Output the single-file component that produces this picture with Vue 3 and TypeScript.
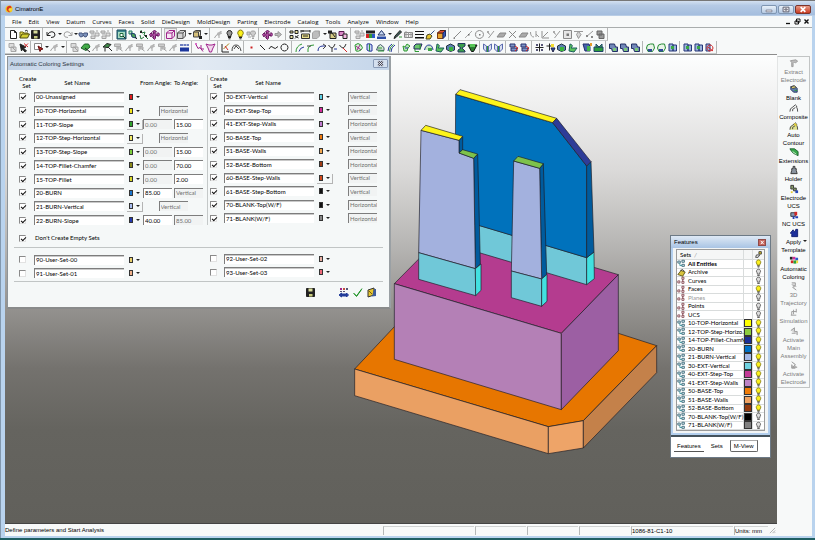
<script setup lang="ts">
import { h, reactive, ref, type FunctionalComponent } from 'vue'

type Shape = [d: string, fill: string, stroke?: string]

const K = '#222', G = '#a2a2a2', B = '#26379b', GR = '#2f9a35', P = '#a0248c', T = '#2b8a93', Y = '#f3dc2e', R = '#d32626'

const glyphs: Record<string, Shape[]> = {
  new: [['M2.5 1.5h4l2 2v6h-6z', '#fff', K], ['M6.5 1.5v2h2', 'none', K]],
  open: [['M1 9V3h3l1 1h4v2', '#e8d84a', '#6b6512'], ['M1 9l2-4h7.500l-2 4z', '#d3cd31', '#4c4a12'], ['M6 2q2-1.500 3 .5', 'none', K]],
  save: [['M1.500 1.500h8v8h-8z', '#222', K], ['M3.500 1.500h4v3h-4z', '#d8dc9a'], ['M4 7h3.500v2.500H4z', '#c6ca7c']],
  undo: [['M1 3v3.500h3.500M1.500 6Q3 2.500 6 2.700T9 6q0 2.500-4 2.500', 'none', K]],
  redo: [['M10 3v3.500H6.500M9.500 6Q8 2.500 5 2.700T2 6q0 2.500 4 2.500', 'none', G]],
  glasses: [['M1 4h3l1 1.500L6 4h3.500v2L8 8 6 7.500 5.300 6 4.500 7.500 2.500 8 1 6z', '#7d93bb', '#44557f']],
  selGrey: [['M1 2h4v2H1zM6 4h4v3H6zM2 7h4v2.500H2z', '#ddd', G], ['M2 5h3M7 2h2', 'none', G]],
  fit: [['M1 1h9v9H1z', '#3d8a8f', '#1b4a5f'], ['M2 3h7v6H2z', '#a9dcc4'], ['M4 4.500h3v3H4z', '#fff', '#216a3f'], ['M7 7l2.500 2.500', 'none', K]],
  zoomG: [['M2 2l3 0 0 3-3 0z', '#bfe2c0', '#276'], ['M4 4l4 1 1 4-4-1z', '#4da457', '#1c3c6c'], ['M8 8l2 2', 'none', K]],
  panG: [['M3 1l1 3 3-1-1 3 4 4M2 6l1 4 3-2', 'none', '#23753a'], ['M2 2h2v2H2zM7 6h2v2H7z', '#222']],
  rotP: [['M5.500 1l2 2h-1.500v2h3v-1.500l2 2-2 2V6.500H6.500v2.500l-1 1.500-2-2h1V7H2v1L.5 5.500l2-2V5h2V3h-1z', '#b14fa4', '#6a1b63']],
  cubeP: [['M1.500 4h5.500v5.500H1.500zM1.500 4l2.500-2.500h5.500L7 4M9.500 1.500V7L7 9.500', '#f6e4f3', P]],
  cubeG: [['M1.500 4h5.500v5.500H1.500zM1.500 4l2.500-2.500h5.500L7 4M9.500 1.500V7L7 9.500', '#d4d4d4', '#555']],
  cubeK: [['M1.500 3h5v5h-5zM1.500 3l2-1.500h5l-2 1.500M8.500 1.500v5L6.500 8', '#d5c07a', '#444'], ['M7 7h3v3H7z', '#222']],
  bulbK: [['M5.500 1.500a2.500 2.500 0 0 1 1.500 4.500v1.500H4V6A2.500 2.500 0 0 1 5.500 1.500z', '#999', K], ['M4 8.500h3M4.500 9.800h2', 'none', K]],
  bulbY: [['M5.500 1a3 3 0 0 1 1.700 5.300v1.200H3.800V6.300A3 3 0 0 1 5.500 1z', '#fbf01c', '#857c10'], ['M4 8.500h3M4.500 9.800h2', 'none', K]],
  bulbG: [['M1 3h3v3H1zM7 2a2 2 0 0 1 1 4v2H6V6a2 2 0 0 1 1-4z', '#ccc', G], ['M2 8h3M6 9.500h2', 'none', G]],
  arrG: [['M2 4.500h3v-2l3.500 3-3.500 3v-2H2z', '#bbb', '#999']],
  layers: [['M1 2h3v2H1zM6 1.500h3v3H6zM1 6.500h3v3H1z', '#ece3a0', K], ['M6 7l3.500 2M9.500 6L6 9.500', 'none', K]],
  measure: [['M1 2h9M1 1v2.500M10 1v2.500M3 1v2', 'none', K], ['M1.500 5h8v4.500h-8z', '#eadf8d', '#333'], ['M3 7h5', 'none', K]],
  greyBox: [['M1.500 4l2-2h5v5L6 9.500H1.500z', '#bdbdbd', G], ['M8 2v3', 'none', G]],
  cubeDark: [['M3 4h6v5.500H3z', '#d8cd86', K], ['M1 1.500h4v3H1z', '#222'], ['M5 4l3 4', 'none', K]],
  cubePink: [['M1 2.500h5v4H1z', '#d98ac7', '#5a1950'], ['M5 5h4v4.500H5z', '#f3b8e0', K]],
  palette: [['M1 1.500h9v3H1z', '#222'], ['M1 5h3v4H1z', R], ['M4 5h3v4H4z', GR], ['M7 5h3v4H7z', '#2b57c8']],
  bucket: [['M2 6l3.500-4.500L9 6z', '#c7d7f0', '#1b2f66'], ['M1 7.500h9V10H1z', '#2b4da6']],
  pen: [['M2 9.500l1-2.500 5-5.500 1.500 1.500-5.500 5.500z', '#3c5c57', K], ['M7 8h3', 'none', GR]],
  dots: [['M1.500 3.500h8v5h-8z', '#f4f4f4', '#888'], ['M2 5.500h7M3 2v7M5.500 3v5M8 3v5', 'none', '#999']],
  lines: [['M1 2.500h9M1 5.500h9M1 8.500h9M1 9h9', 'none', '#111']],
  brush: [['M2 6l3-1 2 2-2 3-4 0z', '#e5c42d', '#4a4620'], ['M5.500 5.500L9.500 1.500', 'none', '#33538f']],
  cubeCol: [['M1.500 4h5.500v5.500H1.500z', '#e8a42f', '#7c3b12'], ['M1.500 4l2.500-2.500h5.500L7 4z', '#e14f38', '#5b2410'], ['M7 4l2.500-2.500V7L7 9.500z', '#3658b8', '#1c2b6b']],
  line: [['M2 9L9 2', 'none', '#8a8a8a'], ['M1.500 8.500h1.500v1.500H1.500z', '#888']],
  line2: [['M2 9L9 2', 'none', '#aaa'], ['M5 5h1.500v1.500H5z', '#666']],
  circG: [['M5.500 1.500a4 4 0 1 1-.1 0z', 'none', '#8a8a8a'], ['M5 5h1.500v1.500H5z', '#777']],
  yG: [['M2 3l3 2.500M9 2L3.500 9', 'none', '#999'], ['M2 2h2v2H2z', '#aaa']],
  planeG: [['M1 8l3-4h6L7.500 8z', '#aaa', '#888']],
  xG: [['M2 2l7 7M9 2L2 9', 'none', '#888']],
  axG: [['M2 2v7h7M3 8l5-5', 'none', '#8f8f8f']],
  uG: [['M1.500 3q0 5 3.500 5M7 2v6M7 5l3 3', 'none', '#999']],
  boxG: [['M1.500 1.500h8v8h-8z', '#e6e6e6', '#8a8a8a'], ['M4.500 4.500h2.500v2.500H4.500z', '#777']],
  ptG: [['M1 2.500h9M5.500 2.500l2.500 3-2.500 4-2-4z', '#d5d5d5', '#999']],
  pctG: [['M2 8l7-6', 'none', '#999'], ['M2 6h2v2H2zM7 7h2v2H7z', '#888']],
  solidG: [['M2 2h5v4H2zM4 5h5v4.500H4z', '#999', '#666']],
  curG: [['M2 1.500h5v4H2zM4 5h5v4.500H4z', '#ddd', '#a7a7a7'], ['M5 5l4 4', 'none', G]],
  curR: [['M2 2l6 3-2.500 1L8.500 9l-1.500 1-2.500-3L3.500 9z', '#222', K], ['M6 1.500l4 3.500M10 1.500L6.500 5', 'none', R]],
  selR: [['M1.500 1.500h7v6h-7z', '#fff', '#888'], ['M5 4l5 3-2 .5-1 2z', '#b3241f', '#611']],
  toolG: [['M1.500 9q1-3 4-4l3-3M5 5l4-1M6 4v5', 'none', G], ['M4 4l4-2v3l-3 2z', '#b5b5b5']],
  toolG2: [['M1.500 2h6v2.500h-6zM5 5h3v2H5z', '#ccc', '#aaa'], ['M4 5v4M7 7l2.500 2', 'none', '#999']],
  green1: [['M1 6l3.500-4h4l1.500 3-4 3.500z', '#43ac49', '#1b5f27'], ['M5 6l5 4', 'none', K]],
  green2: [['M1 5l4-3.500 4 1-3 3z', '#3f8b49', '#222'], ['M6 5l4 4M3 6v3.500', 'none', K]],
  blueM: [['M1 2h3v2H1zM4.500 2H7v2H4.500zM7.500 2H10v2H7.500z', '#6e7fc1'], ['M1 5.500h9v4H1z', '#1d379d']],
  pinkC: [['M1.500 1.500l2.500 5 2-1 3 4M7 3v4l3 0', 'none', P], ['M1 1h2v2H1z', '#d86fc8']],
  pinkV: [['M1 2l3 1h3l3-1-2.500 5-1 3h-2l-1-3z', '#f0d8ec', P]],
  editY: [['M2 2v8h7', 'none', K], ['M3.500 7L9 1.500', 'none', '#a17b12'], ['M5 4l3 4', 'none', R]],
  arc: [['M1 9q0-6 4-6t5 6M3 7l2-3 3 3', 'none', '#444']],
  dot: [['M4.500 4.500h2v2h-2z', '#c22']],
  seg: [['M3 3l5 5', 'none', K]],
  wave: [['M1 7q2-4 4-1.500T10 4.500', 'none', K]],
  circ: [['M5.500 2a3.500 3.500 0 1 1-.1 0z', 'none', K]],
  gc1: [['M2 10q0-6 6-8', 'none', GR], ['M5 9.500q1-4 5-4.500', 'none', B]],
  gc2: [['M3 10q-1-7 6-7', 'none', GR], ['M2 4h4', 'none', '#444']],
  gc3: [['M2 9q0-5 5-5h3', 'none', B], ['M7 2l3 2-3 3', 'none', '#444']],
  gc4: [['M1.500 3q2 3 3.500 3T8 2M5 6v4', 'none', '#333'], ['M7 7h3', 'none', B]],
  gc5: [['M1.500 3q2 3 3.500 3T8 2', 'none', '#333'], ['M5 6l4 4', 'none', R]],
  sf1: [['M2 3q3-3 6 0t0 5-5 1z', '#d9edd7', GR], ['M3 4l5 4M7 3L4 8', 'none', P]],
  sf2: [['M3 2q3-1 5 1v6q-3 1-5-1z', '#c7d5f2', B], ['M5.500 2v7', 'none', GR]],
  sf3: [['M1.500 8q1-5 4-5.500l3.500 3v3z', '#d5e9d5', '#46596b'], ['M3 9h6M3 6h4', 'none', GR]],
  sf4: [['M2 9q0-5 4-7M5 10q0-5 4-7', 'none', B], ['M3.500 9.500q0-5 4-7', 'none', GR]],
  so1: [['M2 4l2 1 2-3 3 2-2 2-1 3H3z', '#b8e4b5', GR], ['M4 6h3', 'none', B]],
  so2: [['M2 4l2-2h6L8 7H2z', '#6cc66f', '#226'], ['M3 7v2.500h4M8 2v6', 'none', GR]],
  so3: [['M1.500 8q1-5 4.500-5t4 5', '#c7e9c4', B], ['M5 6h4v3H5z', '#3fa548']],
  so4: [['M3 2q4 1 1 4h6l-3 4-5-1z', '#5cc35c', '#1c5e5e']],
  so5: [['M1.500 4l4-2 4 2v4l-4 1.500-4-2z', '#5b7fb0', '#234'], ['M4 5h4v4H4z', '#3bb33f']],
  so6: [['M2 1.500h7v2.500l-3 2 3 3v1H2V8l3-2-3-2z', '#3b9d4d', '#23375f']],
  so7: [['M1 3h9L6.500 9.500h-2z', '#2b7b33', '#111'], ['M3 2h5v3H3z', '#56c456']],
  tr: [['M1.500 2l3 2v6l-3-3zM9.500 2l-3 2v6l3-3z', '#d8dff0', '#5a6aae'], ['M5.500 4v6', 'none', GR]],
  wk: [['M2 2h5v3H2zM3 6h6v3H3z', '#8096c6', '#26306e'], ['M7 4l3 2-3 3', 'none', R]],
  gd: [['M1.500 5.500h8M5.500 1.500v8', 'none', K], ['M2 2h2v2H2zM7 2h2v2H7zM2 7h2v2H2zM7 7h2v2H7z', '#557']],
  gdY: [['M1.500 4h7M4.500 1.500v7', 'none', K], ['M6 2h3v3H6z', Y], ['M6 6l4 0-2 4z', '#2b57a8', '#224']],
  mold1: [['M1 2h6l1 3v4H3z', '#4662aa', '#1e2d6b'], ['M5 4h3v5H5z', '#43b648'], ['M8 1h2v3H8z', '#e59b2a']],
  mold2: [['M1 5h9v4.500H1z', '#2d9d3c', '#1e4569'], ['M3 2l3 3 3-3v3H3z', '#54c255', '#1e4569']],
  mold3: [['M1.500 2h5l1 3h2v4.500h-5l-1-3h-2z', '#7188b8', '#223065'], ['M5 6h3v3H5z', '#7cc97a']],
  mold4: [['M1.500 6q0-4 4-4h3l1 4-2 3.500H3z', '#e9f4e8', '#258b34'], ['M3 7h4v2.500H3z', '#34489e']],
  mold5: [['M2 2h4v7H2zM6 3h3.500v6H6z', '#9cb4dd', '#263679'], ['M4 4h3v3H4z', '#39a845']],
  moldR: [['M2 2h4v7H2z', '#9cb4dd', '#263679'], ['M6 3a3 3 0 1 1-.1 0zM4 5l5 4', 'none', R]],
  extract: [['M1.500 3l6-1 2 1.500-2.500 2-1-1L4.500 6v3.500H3V5z', '#bbb', '#9a9a9a']],
  blank: [['M2 3l4-1 3 3v4H5L2 6z', '#5e7cae', '#26365e'], ['M2 3l4-1 2 2-4 1z', '#e6d775', '#444'], ['M6 7h3', 'none', GR]],
  comp: [['M1 9.500q0-4 2.500-4.500L7 2q2 1 1.500 3 1 1 1 4.500M4 9V7l3-2', 'none', '#444']],
  auto: [['M1 9.500q0-4 2.500-4.500L7 2q2 1 1.500 3 1 1 1 4.500M4 9V7l3-2', '#dde08c', '#444'], ['M5 2l4 2-2 2z', '#e4cf33']],
  ext: [['M1 2h5l4 3v4.500L5 7 3 5z', '#39a84b', '#1c5f2d'], ['M4 5l4 3', 'none', '#d8f3d6']],
  holder: [['M4.500 1.500h2V4H8v2l1 3.500H2L3 6V4h1.500z', '#8a94a0', '#333']],
  eucs: [['M2 1.500h3v3h3v3H5v-2H2z', '#8aa06c', '#333'], ['M7 7h3v3H7z', '#2848b8'], ['M2 8h2v2H2z', '#e6cc2c']],
  nucs: [['M2 3h5v4H2z', '#8599b5', '#333'], ['M6 2h3v4H6z', R], ['M7 7h3v2H7zM4 7h2v3H4z', '#243fb3']],
  apply: [['M1.500 5.500l3-3.500 1 2h1l1-2.500h2V9.500H3V7z', '#1d2f9b', '#111f70']],
  acol: [['M1 2h3v3H1z', K], ['M4 2h3v3H4z', '#d32e9a'], ['M7 3h3v3H7z', '#2b57c8'], ['M2 6h3v3H2z', R], ['M5 6h3v3.500H5z', '#2aa23a'], ['M8 6h2v3H8z', Y]],
  g1: [['M3 2h4v3l-3 2 4 3M3 4l5 2', '#ddd', '#9a9a9a']],
  g2: [['M3 9V5h5M5 3v5M2 9h6M8 2v4', 'none', '#999']],
  g3: [['M2 5l4-3v4l3 0v4M3 8h4', '#d5d5d5', '#999']],
  g4: [['M3 2l4 3-3 3 5 0M3 5v4h4', '#bbb', '#999']],
  sync: [['M2 1h2v2H2z', P], ['M5 1h2v2H5z', '#c2503e'], ['M8 1h2v2H8z', '#557'], ['M2 4h2v1H2zM5 4h2v1H5z', '#557'], ['M1 8l2.500-2v1h5V6L10.500 8l-2 2V9h-5v1z', '#223c9a', '#223c9a']],
  check: [['M1.500 6l3 3L10 1.500', 'none', '#1f9427'], ['M2 6.500l2.500 3L9.500 2.500', 'none', '#1f9427']],
  exit: [['M2 3l6-2v7l-6 2z', '#e6c62f', '#333'], ['M8 2h2v7l-4 .5z', '#3f5d9a'], ['M3 4l3 3', 'none', '#7a5a10']],
  setT: [['M1 2.500h3V5H1zM6 1.500h3V4H6zM6 6.500h3V9H6z', '#e2f0f4', '#2f5f70'], ['M3.500 5v3H6', 'none', T]],
  setP: [['M1 6h2.500v2.500H1zM6 1.500h2.500V4H6zM6 6.500h2.500V9H6zM7 4v2.500', '#fff', '#7c3a44']],
  arch: [['M1 8l4-5 5 2-3 5z', '#d7c23e', '#52480f'], ['M4 3l3-1 2 2', 'none', K]],
  key: [['M2 9l1-3 4 0-2 3z', '#eee', '#333'], ['M6 2h3v3H6z', '#dcc52c', '#333']],
  bulbO: [['M5.500 1.500a2.500 2.500 0 0 1 1.500 4.500v1.500H4V6A2.500 2.500 0 0 1 5.500 1.500z', '#ddd', '#555'], ['M4 9h3', 'none', K]],
}

const Glyph: FunctionalComponent<{ name: string }> = (p) =>
  h('svg', { viewBox: '0 0 11 11', 'aria-hidden': 'true' },
    (glyphs[p.name] ?? []).map(([d, fill, stroke]) => h('path', { d, fill, stroke: stroke ?? 'none' })))
Glyph.props = ['name']

const menus = ['File', 'Edit', 'View', 'Datum', 'Curves', 'Faces', 'Solid', 'DieDesign', 'MoldDesign', 'Parting', 'Electrode', 'Catalog', 'Tools', 'Analyze', 'Window', 'Help']

// "v" is a drop-down arrow, everything else is a glyph name
const bars: string[][][] = [
  [
    ['new', 'open', 'save'],
    ['undo', 'v', 'redo', 'v', 'glasses', 'selGrey', 'selGrey'],
    ['fit', 'zoomG', 'panG', 'rotP'],
    ['cubeP', 'cubeG', 'v', 'cubeK', 'v'],
    ['toolG', 'bulbK', 'bulbY', 'bulbG'],
    ['rotP', 'arrG'],
    ['layers', 'measure', 'greyBox', 'v', 'cubeDark', 'cubePink'],
    ['selGrey', 'palette', 'bucket', 'v', 'pen', 'dots', 'lines', 'brush', 'cubeCol'],
    ['line', 'line2', 'circG', 'yG', 'planeG', 'xG', 'planeG', 'uG', 'axG', 'yG', 'boxG', 'ptG', 'pctG', 'solidG'],
  ],
  [
    ['curG', 'curR'],
    ['selR', 'v', 'toolG', 'v'],
    ['curG', 'green1', 'toolG', 'green2', 'toolG2', 'toolG', 'toolG2', 'toolG', 'toolG2', 'toolG', 'blueM'],
    ['pinkC', 'pinkV'],
    ['editY', 'arc'],
    ['dot', 'seg', 'wave', 'circ'],
    ['gc1', 'gc2', 'gc3', 'gc4', 'gc5'],
    ['sf1', 'sf2', 'sf3', 'sf4'],
    ['so1', 'so2', 'so3', 'so4', 'so5', 'so6', 'so7'],
    ['tr', 'tr'],
    ['wk', 'wk'],
    ['gd', 'gdY', 'so5', 'so4'],
    ['mold1', 'mold2'],
    ['mold3', 'mold3', 'mold3'],
    ['mold4', 'mold4', 'mold5'],
    ['mold5', 'mold5', 'moldR'],
  ],
]

interface SetRow { name: string; on: boolean; color: string; from?: string; to?: string; kind?: string; lockFrom?: boolean; lockTo?: boolean; raised?: boolean }

const leftSets = reactive<SetRow[]>([
  { name: '00-Unassigned', on: true, color: '#e01c1c' },
  { name: '10-TOP-Horizontal', on: true, color: '#f2e41c', kind: 'Horizontal' },
  { name: '11-TOP-Slope', on: true, color: '#2fa42c', from: '0.00', to: '15.00', lockFrom: true, raised: true },
  { name: '12-TOP-Step-Horizontal', on: true, color: '#f4ec6a', kind: 'Horizontal', raised: true },
  { name: '13-TOP-Step-Slope', on: true, color: '#7ccf3c', from: '0.00', to: '15.00', lockFrom: true },
  { name: '14-TOP-Fillet-Chamfer', on: true, color: '#8c8a1a', from: '0.00', to: '70.00', lockFrom: true },
  { name: '15-TOP-Fillet', on: true, color: '#d9d82a', from: '0.00', to: '2.00', lockFrom: true },
  { name: '20-BURN', on: true, color: '#1a74cc', from: '85.00', to: 'Vertical', lockTo: true },
  { name: '21-BURN-Vertical', on: true, color: '#a8bdf0', kind: 'Vertical', raised: true },
  { name: '22-BURN-Slope', on: true, color: '#2438b0', from: '40.00', to: '85.00', lockTo: true },
])
const rightSets = reactive<SetRow[]>([
  { name: '30-EXT-Vertical', on: true, color: '#5ed0e4', kind: 'Vertical' },
  { name: '40-EXT-Step-Top', on: true, color: '#d42c9c', kind: 'Vertical' },
  { name: '41-EXT-Step-Walls', on: true, color: '#c07ad0', kind: 'Horizontal' },
  { name: '50-BASE-Top', on: true, color: '#ee7a10', kind: 'Vertical' },
  { name: '51-BASE-Walls', on: true, color: '#f2a850', kind: 'Horizontal' },
  { name: '52-BASE-Bottom', on: true, color: '#a03c14', kind: 'Horizontal' },
  { name: '60-BASE-Step-Walls', on: true, color: '#d24a1c', kind: 'Vertical', raised: true },
  { name: '61-BASE-Step-Bottom', on: true, color: '#111', kind: 'Vertical' },
  { name: '70-BLANK-Top(W/F)', on: true, color: '#111', kind: 'Horizontal' },
  { name: '71-BLANK(W/F)', on: true, color: '#888', kind: 'Horizontal' },
])
const userLeft = reactive<SetRow[]>([
  { name: '90-User-Set-00', on: false, color: '#e8cf6a' },
  { name: '91-User-Set-01', on: false, color: '#f0b08a' },
])
const userRight = reactive<SetRow[]>([
  { name: '92-User-Set-02', on: false, color: '#e8b0a4' },
  { name: '93-User-Set-03', on: false, color: '#ee6a7a' },
])
const skipEmpty = ref(true)

const commands = [
  { icon: 'extract', label: ['Extract', 'Electrode'], off: true },
  { icon: 'blank', label: ['Blank'] },
  { icon: 'comp', label: ['Composite'] },
  { icon: 'auto', label: ['Auto', 'Contour'] },
  { icon: 'ext', label: ['Extensions'] },
  { icon: 'holder', label: ['Holder'] },
  { icon: 'eucs', label: ['Electrode', 'UCS'] },
  { icon: 'nucs', label: ['NC UCS'] },
  { icon: 'apply', label: ['Apply', 'Template'], menu: true },
  { icon: 'acol', label: ['Automatic', 'Coloring'] },
  { icon: 'g1', label: ['3D', 'Trajectory'], off: true },
  { icon: 'g2', label: ['Simulation'], off: true },
  { icon: 'g3', label: ['Activate', 'Main', 'Assembly'], off: true },
  { icon: 'g4', label: ['Activate', 'Electrode'], off: true },
]

interface Feature { name: string; icon: string; lit: boolean; color?: string; cls?: string }
const features: Feature[] = [
  { name: 'All Entities', icon: 'setT', lit: true, cls: 'strong' },
  { name: 'Archive', icon: 'arch', lit: false },
  { name: 'Curves', icon: 'setP', lit: false },
  { name: 'Faces', icon: 'setP', lit: true },
  { name: 'Planes', icon: 'setP', lit: false, cls: 'dim' },
  { name: 'Points', icon: 'setP', lit: false },
  { name: 'UCS', icon: 'setP', lit: false },
  { name: '10-TOP-Horizontal', icon: 'setT', lit: true, color: '#ffff00' },
  { name: '12-TOP-Step-Horizo...', icon: 'setT', lit: true, color: '#8ccb3e' },
  { name: '14-TOP-Fillet-Chamfer', icon: 'setT', lit: true, color: '#1c2f96' },
  { name: '20-BURN', icon: 'setT', lit: true, color: '#0072c6' },
  { name: '21-BURN-Vertical', icon: 'setT', lit: true, color: '#a4b8e6' },
  { name: '30-EXT-Vertical', icon: 'setT', lit: true, color: '#70d2e0' },
  { name: '40-EXT-Step-Top', icon: 'setT', lit: true, color: '#c23a96' },
  { name: '41-EXT-Step-Walls', icon: 'setT', lit: true, color: '#bd84c6' },
  { name: '50-BASE-Top', icon: 'setT', lit: true, color: '#f07c08' },
  { name: '51-BASE-Walls', icon: 'setT', lit: true, color: '#f0a262' },
  { name: '52-BASE-Bottom', icon: 'setT', lit: true, color: '#94390d' },
  { name: '70-BLANK-Top(W/F)', icon: 'setT', lit: false, color: '#000' },
  { name: '71-BLANK(W/F)', icon: 'setT', lit: false, color: '#808080' },
]

// painted back to front
const faces: [string, string][] = [
  ['44,867 180,722 835,760 950,797 730,1022 625,1040', '#e77600'],
  ['44,867 625,1040 625,1121 44,947', '#eaa063'],
  ['625,1040 730,1022 730,1104 625,1121', '#eea468'],
  ['730,1022 950,797 950,878 730,1104', '#c4814a'],
  ['163,611 337,435 835,584 664,760', '#b43c8f'],
  ['163,611 664,760 664,989 163,838', '#b480b6'],
  ['664,760 835,584 835,812 664,989', '#9c5fa3'],
  ['347,415 740,533 740,614 347,497', '#70c8d8'],
  ['740,533 762,516 763,596 740,614', '#42e0e0'],
  ['347,43 638,128 740,258 740,533 345,415', '#0072bc'],
  ['740,258 753,245 762,516 740,533', '#005b9d'],
  ['347,43 360,29 650,115 638,128', '#fdf41a'],
  ['638,128 650,115 753,245 740,258', '#2e3c98'],
  ['401,235 413,222 421,552 406,566', '#005b9d'],
  ['357,181 368,169 368,210 357,219', '#005b9d'],
  ['243,151 357,181 357,219 401,235 406,566 236,518', '#a3b1de'],
  ['243,151 257,136 368,169 357,181', '#fdf41a'],
  ['357,219 368,209 413,222 401,235', '#7dc24b'],
  ['236,518 406,566 407,647 236,598', '#70c8d8'],
  ['406,566 423,552 423,631 407,647', '#42e0e0'],
  ['599,265 610,251 620,583 605,597', '#005b9d'],
  ['521,243 599,265 605,597 514,573', '#a3b1de'],
  ['521,243 534,229 610,251 599,265', '#7dc24b'],
  ['514,573 605,597 605,679 514,653', '#70c8d8'],
  ['605,597 621,583 621,664 605,679', '#42e0e0'],
]
</script>

<template>
  <div class="window">
    <header class="titlebar">
      <svg class="logo" viewBox="0 0 9 9" aria-hidden="true">
        <circle cx="4.500" cy="4.500" r="4" fill="#f4c81e" />
        <path d="M6.500 1A3.600 3.600 0 1 0 6 8Q3 6 4 4.500T7.500 3z" fill="#dc3322" />
        <path d="M4.500 4h3v2h-3z" fill="#f9dc3a" />
      </svg>
      <h1>CimatronE</h1>
      <div class="winbtns">
        <button aria-label="Minimize"><svg viewBox="0 0 8 6"><path d="M1.500 3.500h5v1.500h-5z" fill="#fff" stroke="#667" stroke-width=".6" /></svg></button>
        <button aria-label="Maximize"><svg viewBox="0 0 8 6"><path d="M1.500 1h5v4h-5zM3 2.500h2v1H3z" fill="#fff" stroke="#556" stroke-width=".8" /></svg></button>
        <button class="red" aria-label="Close"><svg viewBox="0 0 8 6"><path d="M2 1l4 4M6 1L2 5" stroke="#fff" stroke-width="1.400" /></svg></button>
      </div>
    </header>

    <div class="body">
      <nav class="menubar">
        <a v-for="m in menus" :key="m" href="#">{{ m }}</a>
        <span class="mdi">
          <button aria-label="Minimize document"><svg viewBox="0 0 7 7"><path d="M1 5.500h4" stroke="#111" stroke-width="1.300" /></svg></button>
          <button aria-label="Restore document"><svg viewBox="0 0 7 7"><path d="M2.500 1h3.500v3H2.500zM1 3h3.500v3H1z" fill="#fff" stroke="#111" /></svg></button>
          <button aria-label="Close document"><svg viewBox="0 0 7 7"><path d="M1.500 1.500l4 4M5.500 1.500l-4 4" stroke="#111" stroke-width="1.400" /></svg></button>
        </span>
      </nav>

      <div v-for="(bar, b) in bars" :key="b" class="toolbar" :class="{ tight: b === 1 }" role="toolbar">
        <div v-for="(group, g) in bar" :key="g" class="group">
          <button v-for="(item, i) in group" :key="i" :class="{ caret: item === 'v', pressed: item === 'cubeP' }" :aria-label="item === 'v' ? 'More' : item">
            <Glyph v-if="item !== 'v'" :name="item" />
          </button>
        </div>
      </div>

      <div class="main">
        <main class="view">
          <svg class="model" viewBox="0 0 990 1140" role="img" aria-label="Electrode model">
            <polygon v-for="([pts, fill], i) in faces" :key="i" :points="pts" :fill="fill" />
          </svg>

          <section class="dialog" role="dialog" aria-label="Automatic Coloring Settings">
            <div class="dialog-title">
              <h2>Automatic Coloring Settings</h2>
              <button aria-label="Close dialog"><svg viewBox="0 0 8 6"><path d="M2 1l4 4M6 1L2 5" stroke="#445" stroke-width="1.800" /><path d="M2 1l4 4M6 1L2 5" stroke="#fff" stroke-width=".7" /></svg></button>
            </div>
            <div class="dialog-body">
              <div class="columns">
                <div class="col left">
                  <div class="heads">
                    <span class="h-create">Create<br>Set</span><span class="h-name">Set Name</span><span class="h-from">From Angle:</span><span class="h-to">To Angle:</span>
                  </div>
                  <div class="rows">
                    <div v-for="r in leftSets" :key="r.name" class="row">
                      <input v-model="r.on" type="checkbox" :aria-label="'Create ' + r.name">
                      <input v-model="r.name" class="field" type="text" aria-label="Set name">
                      <button class="pick" :class="{ raised: r.raised }" :aria-label="'Color of ' + r.name"><i :style="{ background: r.color }"></i></button>
                      <span class="angles">
                        <input v-if="r.kind" class="field" type="text" :value="r.kind" disabled aria-label="Direction">
                        <template v-else-if="r.from">
                          <input v-model="r.from" class="field" type="text" :disabled="r.lockFrom" aria-label="From angle">
                          <input v-model="r.to" class="field" type="text" :disabled="r.lockTo" aria-label="To angle">
                        </template>
                      </span>
                    </div>
                  </div>
                </div>
                <div class="col right">
                  <div class="heads">
                    <span class="h-create">Create<br>Set</span><span class="h-name">Set Name</span>
                  </div>
                  <div class="rows">
                    <div v-for="r in rightSets" :key="r.name" class="row">
                      <input v-model="r.on" type="checkbox" :aria-label="'Create ' + r.name">
                      <input v-model="r.name" class="field" type="text" aria-label="Set name">
                      <button class="pick" :class="{ raised: r.raised }" :aria-label="'Color of ' + r.name"><i :style="{ background: r.color }"></i></button>
                      <span class="angles"><input class="field" type="text" :value="r.kind" disabled aria-label="Direction"></span>
                    </div>
                  </div>
                </div>
              </div>
              <label class="skip"><input v-model="skipEmpty" type="checkbox">Don't Create Empty Sets</label>
              <div class="columns users">
                <div v-for="(list, s) in [userLeft, userRight]" :key="s" class="col" :class="s ? 'right' : 'left'">
                  <div class="rows">
                    <div v-for="r in list" :key="r.name" class="row">
                      <input v-model="r.on" type="checkbox" :aria-label="'Create ' + r.name">
                      <input v-model="r.name" class="field" type="text" aria-label="Set name">
                      <button class="pick" :aria-label="'Color of ' + r.name"><i :style="{ background: r.color }"></i></button>
                    </div>
                  </div>
                </div>
              </div>
              <div class="actions">
                <button class="store" aria-label="Save"><Glyph name="save" /></button>
                <button aria-label="Preview"><Glyph name="sync" /></button>
                <button class="ok" aria-label="Apply"><Glyph name="check" /></button>
                <button aria-label="Exit"><Glyph name="exit" /></button>
              </div>
            </div>
          </section>

          <section class="features" aria-label="Features">
            <div class="features-title">
              <h2>Features</h2>
              <button aria-label="Close features"><svg viewBox="0 0 7 6"><path d="M2 1l3.500 4M5.500 1L2 5" stroke="#fff" stroke-width="1.200" /></svg></button>
            </div>
            <div class="features-body">
              <table>
                <thead>
                  <tr><th>Sets <em>/</em></th><th></th><th><Glyph name="key" /></th></tr>
                </thead>
                <tbody>
                  <tr v-for="f in features" :key="f.name">
                    <td :class="f.cls"><Glyph :name="f.icon" />{{ f.name }}</td>
                    <td><i v-if="f.color" :style="{ background: f.color }"></i></td>
                    <td><Glyph :name="f.lit ? 'bulbY' : 'bulbO'" /></td>
                  </tr>
                </tbody>
              </table>
            </div>
            <div class="tabs">
              <button>Features</button><button class="current">Sets</button><button class="boxed">M-View</button>
            </div>
          </section>
        </main>

        <aside class="guide">
          <div class="guide-box">
            <button v-for="(c, i) in commands" :key="i" :class="{ off: c.off }">
              <Glyph :name="c.icon" />
              <span v-for="l in c.label" :key="l">{{ l }}</span>
              <b v-if="c.menu"></b>
            </button>
          </div>
        </aside>
      </div>

      <footer class="status">
        <span class="msg">Define parameters and Start Analysis</span>
        <span class="w90"></span><span class="w52"></span><span class="w52"></span><span class="w52"></span>
        <span class="w104">1086-81-C1-10</span>
        <span class="units">Units: mm</span>
        <svg class="grip" viewBox="0 0 8 8" aria-hidden="true"><path d="M7 1L1 7M7 4L4 7M7 6L6 7" stroke="#aaa" /></svg>
      </footer>
    </div>
  </div>
</template>

<style>
body { background: #1f5f63; }
html, body, #app { height: 100%; overflow: hidden; }
</style>

<style scoped>
* { box-sizing: border-box; }
.window { display: flex; flex-direction: column; height: calc(100vh - 2px); padding: 0 3px 2px 4px; background: #b9d3ee; border-top: 1px solid #777; border-left: 1px solid #8298ae; font: 6px/8px "Liberation Sans", Arial, sans-serif; color: #000; }
button { display: block; margin: 0; padding: 0; border: 0; background: none; font: inherit; color: inherit; }
h1, h2 { margin: 0; font: inherit; }
svg { display: block; }
a { color: inherit; text-decoration: none; }

.titlebar { display: flex; align-items: center; flex: none; height: 15px; margin: 0 -3px 0 -4px; padding: 1px 4px 0 4px; background: linear-gradient(#d3e0f0, #b5cae5 30%, #a5bede 90%, #c3d4e9); }
.logo { width: 8px; height: 8px; margin-right: 2px; }
.winbtns { display: flex; gap: 1px; margin-left: auto; }
.winbtns button { display: grid; place-items: center; width: 16px; height: 9px; border: 1px solid #7f96b2; border-radius: 2px; background: linear-gradient(#e8f0f9, #b6cae2); }
.winbtns .red { background: linear-gradient(#e79a86, #c93a20); border-color: #7c342a; }
.winbtns svg { width: 10px; height: 7px; }

.body { display: flex; flex-direction: column; flex: 1; min-height: 0; background: #f7f9f9; }
.menubar { display: flex; align-items: center; flex: none; gap: 7px; height: 12px; padding-left: 7px; border-bottom: 1px solid #a9adad; font-family: "Open Sans", "Noto Sans", sans-serif; }
.mdi { display: flex; gap: 2px; margin-left: auto; padding-right: 2px; }
.mdi svg { width: 7px; height: 7px; }

.toolbar { display: flex; align-self: flex-start; flex: none; height: 13px; border-right: 1px solid #b5b5b5; border-bottom: 1px solid #c6c9c9; }
.group { display: flex; align-items: center; padding-right: 1px; padding-left: 3px; border-left: 1px solid #b4b6b6; }
.group:first-child { border-left: 0; }
.tight .group { padding-left: 2px; }
.group button { width: 11px; height: 11px; }
.group .caret { display: grid; place-items: center; width: 5px; height: 11px; }
.caret::before { content: ""; width: 0; border: 2px solid transparent; border-top-color: #222; border-bottom: 0; }
.group svg { width: 11px; height: 11px; }
.pressed { outline: 1px solid #bbb; background: #eee; }

.main { display: flex; flex: 1; min-height: 0; }
.view { position: relative; flex: 1; min-width: 0; border-top: 1px solid #8c8c8c; border-bottom: 1px solid #444; background: linear-gradient(#fdfefe 0%, #f0f0f0 10%, #dad9d8 25%, #b8b7b5 40%, #94928f 54%, #74726e 67%, #65645f 80%, #61605b 100%); }
.model { position: absolute; left: 335px; top: 25px; width: 330px; height: 380px; }
.model polygon { stroke: #1d1d25; stroke-width: 2; stroke-linejoin: round; }

.dialog { position: absolute; left: 2px; top: 1px; width: 384px; border: 1px solid #8d9499; border-right: 2px solid #9aa0a4; border-bottom: 2px solid #898b8b; background: #f5f8f8; }
.dialog-title { display: flex; align-items: center; justify-content: space-between; height: 13px; padding: 0 1px 0 2px; background: linear-gradient(90deg, #c4d4e8, #e2eaf3 50%, #c5d6ea); color: #2c3540; }
.dialog-title button { display: grid; place-items: center; width: 15px; height: 9px; border: 1px solid #8a9cb8; border-radius: 1px; background: #d5e0ef; }
.dialog-title svg { width: 9px; height: 7px; }
.dialog-body { padding: 5px 6px 3px; font-family: Lato, "Liberation Sans", sans-serif; }
.columns { display: flex; align-items: flex-start; }
.col.left { width: 193px; padding-left: 5px; }
.col.right { flex: 1; padding-left: 2px; border-left: 1px solid #c4c8c8; }
.heads { display: flex; height: 15px; text-align: center; }
.heads span { white-space: nowrap; line-height: 7px; }
.h-create { width: 15px; }
.h-name { width: 86px; padding-top: 4px; }
.h-from { width: 50px; padding: 4px 0 0 20px; }
.h-to { width: 32px; padding-top: 4px; }
.rows { display: grid; grid-auto-rows: 1fr; }
.left .rows { height: 137px; }
.right .rows { height: 135px; }
.row { display: flex; align-items: center; }
input[type=checkbox] { appearance: none; flex: none; width: 7px; height: 7px; margin: 0; border: 1px solid #8a8a8a; border-right-color: #e2e2e2; border-bottom-color: #e2e2e2; background: #fff; }
input[type=checkbox]:checked::before { content: ""; display: block; width: 4px; height: 2px; margin: 1px 0 0 1px; border: solid #111; border-width: 0 0 1px 1px; transform: rotate(-45deg); }
.field { width: 90px; height: 10px; margin: 0 0 0 8px; padding: 0 0 1px 1px; border: 0 solid #7d7d7d; border-width: 1px 0 0 1px; outline: 0; background: #fff; font: inherit; line-height: 8px; color: #000; }
.row > .field { box-shadow: inset 0 1px #c9c9c9; }
.pick { display: flex; align-items: center; gap: 3px; width: 16px; height: 10px; margin-left: 2px; padding-left: 3px; }
.pick i { width: 4px; height: 6px; border: 1px solid #333; }
.pick::after { content: ""; border: 2px solid transparent; border-top-color: #222; border-bottom: 0; }
.raised { box-shadow: 1px 1px #b4b4b4; }
.angles { display: flex; justify-content: center; gap: 2px; width: 60px; margin-left: 1px; }
.angles .field { width: 29px; margin: 0; }
.angles .field:disabled { background: #f1f3f3; color: #707070; }
.right .row > .field { margin-left: 7px; }
.right .angles { width: 29px; margin-left: 16px; }
.skip { display: flex; align-items: center; gap: 9px; height: 20px; padding: 2px 0 0 5px; }
.users { padding: 5px 0 1px; border-top: 1px solid #c1c5c5; border-bottom: 1px solid #c1c5c5; }
.users .left .rows, .users .right .rows { height: 27px; }
.users .col.right { border-left-color: transparent; margin-top: -1px; }
.actions { display: flex; justify-content: flex-end; gap: 3px; padding: 5px 6px 6px 0; }
.actions .store { margin-right: 19px; }
.actions svg { width: 11px; height: 11px; }

.features { position: absolute; right: 6px; top: 180px; width: 101px; border: 1px solid #6d7a86; background: #fff; }
.features-title { display: flex; align-items: center; justify-content: space-between; height: 12px; padding: 0 4px 0 3px; background: linear-gradient(#dfe9f5, #a9c4e4); }
.features-title button { width: 8px; height: 7px; border: 1px solid #904a48; background: #c6645c; }
.features-title svg { width: 6px; height: 5px; }
.features-body { padding: 1px 3px 2px; border: solid #b3cfee; border-width: 0 2px 2px; background: #f3f5f5; }
table { display: block; border: 1px solid #9a9a9a; background: #fff; font: 6px/8px Lato, "Liberation Sans", sans-serif; }
thead { display: block; }
tbody { display: grid; grid-auto-rows: 1fr; height: 170px; }
tr { display: grid; grid-template-columns: 1fr 9px 11px; align-items: stretch; min-height: 0; border-bottom: 1px solid #d9dcdc; }
thead tr { height: 10px; background: #f5f6f6; }
th, td { display: flex; align-items: center; min-width: 0; min-height: 0; padding: 0; white-space: nowrap; font-weight: normal; border-right: 1px solid #d9dcdc; }
th:last-child, td:last-child { border-right: 0; }
th:first-child { padding-left: 3px; gap: 3px; }
em { color: #888; }
td svg, th svg { flex: none; }
td:first-child svg { margin: 0 2px 0 0; width: 9px; height: 9px; }
td:last-child svg, th:last-child svg { margin: 0 auto; width: 9px; height: 9px; }
td i { width: 8px; height: 8px; border: 1px solid #333; }
.strong { font-weight: bold; }
.dim { color: #999; }
.tabs { display: flex; gap: 1px; height: 22px; padding: 3px 3px 5px; border-top: 2px solid #44525c; }
.tabs button { padding: 0 3px; border-bottom: 1px solid #555; }
.tabs .current { border: 0; padding: 0 6px; }
.tabs .boxed { border: 1px solid #666; border-top-color: #aaa; border-radius: 0 0 2px 2px; }

.guide { flex: none; width: 35px; padding: 2px 2px 0 0; }
.guide-box { display: flex; flex-direction: column; justify-content: space-between; min-height: 332px; padding: 1px 0; border: 1px solid #c2c5c5; border-left-color: #e3e5e5; }
.guide button { position: relative; display: flex; flex-direction: column; align-items: center; width: 100%; }
.guide svg { width: 10px; height: 10px; }
.guide span { white-space: nowrap; line-height: 8px; }
.guide b { position: absolute; right: 2px; top: 12px; border: 2px solid transparent; border-top-color: #222; border-bottom: 0; }
.guide .off { color: #7d7d7d; }

.status { display: flex; align-items: center; flex: none; height: 12px; padding: 1px 36px 1px 0; white-space: nowrap; }
.status span { height: 9px; border-left: 1px solid #b5b8b8; border-top: 1px solid #cfd2d2; line-height: 8px; margin-right: 1px; }
.status .msg { flex: 1; border: 0; }
.w90 { width: 91px; }
.w52 { width: 51px; }
.w104 { width: 102px; }
.units { width: 34px; }
.grip { width: 7px; height: 7px; }
</style>
